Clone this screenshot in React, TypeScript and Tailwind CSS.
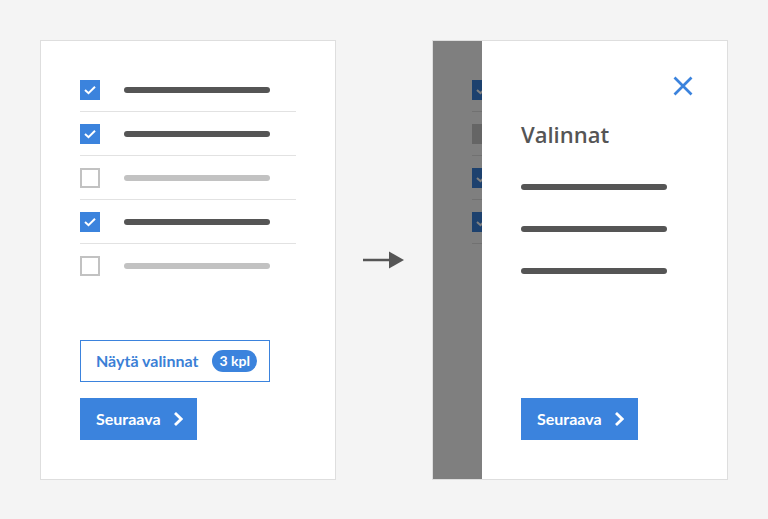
import React from 'react';

const BLUE = 'bg-[#3b83dd]';

type RowState = 'checked' | 'empty' | 'muted';

const CheckMark = () => (
  <svg width="20" height="20" viewBox="0 0 20 20" className="block">
    <polyline points="5,10 8.5,13.2 15,6.7" fill="none" stroke="#fff" strokeWidth="2" />
  </svg>
);

const Checkbox = ({ state }: { state: RowState }) => {
  if (state === 'checked') {
    return (
      <div className={`w-5 h-5 shrink-0 ${BLUE}`}>
        <CheckMark />
      </div>
    );
  }
  if (state === 'muted') {
    return <div className="w-5 h-5 shrink-0 bg-[#cbcbcb]" />;
  }
  return <div className="w-5 h-5 shrink-0 border-2 border-[#c2c2c2] bg-white" />;
};

const ListRow = ({ state, last }: { state: RowState; last?: boolean }) => (
  <div className={`flex items-center gap-6 pt-3 pb-[11px] ${last ? 'border-b border-transparent' : 'border-b border-[#e2e2e2]'}`}>
    <Checkbox state={state} />
    <div className={`h-[6px] w-[146px] rounded-full ${state === 'checked' ? 'bg-[#555555]' : 'bg-[#c2c2c2]'}`} />
  </div>
);

const Chevron = () => (
  <svg width="10" height="14" viewBox="0 0 10 14" className="block">
    <polyline points="2,1 8.2,7 2,13" fill="none" stroke="#fff" strokeWidth="2.8" />
  </svg>
);

const NextButton = () => (
  <button className={`flex items-center gap-[12px] w-[117px] h-[42px] pl-4 ${BLUE} text-white text-[16px] font-bold font-['Lato',sans-serif]`}>
    <span>Seuraava</span>
    <Chevron />
  </button>
);

const Card = ({ children, className = '' }: { children: React.ReactNode; className?: string }) => (
  <div className={`w-[296px] h-[440px] shrink-0 bg-white border border-[#dedede] ${className}`}>{children}</div>
);

const SelectionList = ({ rows }: { rows: RowState[] }) => (
  <div className="flex flex-col">
    {rows.map((r, i) => (
      <ListRow key={i} state={r} last={rows.length === 5 && i === rows.length - 1} />
    ))}
  </div>
);

const FlowArrow = () => (
  <svg width="41" height="18" viewBox="0 0 41 18" className="block">
    <line x1="0" y1="9" x2="28" y2="9" stroke="#555" strokeWidth="2.5" />
    <polygon points="26,0.5 41,9 26,17.5" fill="#555" />
  </svg>
);

const CloseIcon = () => (
  <svg width="20" height="20" viewBox="0 0 20 20" className="block">
    <path d="M1.5 1.5 L18.5 18.5 M18.5 1.5 L1.5 18.5" stroke="#3b83dd" strokeWidth="2.7" />
  </svg>
);

export default function App() {
  return (
    <div className="w-[768px] h-[519px] bg-[#f4f4f4] flex items-center pl-10 pt-10 pb-[39px]">
      {/* list view with selections */}
      <Card className="flex flex-col px-[39px] pt-[27px] pb-[39px]">
        <SelectionList rows={['checked', 'checked', 'empty', 'checked', 'empty']} />
        <div className="mt-auto flex flex-col gap-4">
          <button className="flex items-center gap-[14px] w-[190px] h-[42px] pl-[15px] border border-[#3b83dd] text-[#3b7fd6] text-[16px] font-bold font-['Lato',sans-serif]">
            <span>Näytä valinnat</span>
            <span className={`h-[22px] px-[7px] rounded-full ${BLUE} text-white text-[14px] leading-[22px]`}>3 kpl</span>
          </button>
          <NextButton />
        </div>
      </Card>

      <div className="w-24 flex justify-center pr-[1px]">
        <FlowArrow />
      </div>

      {/* same view with the selections drawer open */}
      <Card className="relative overflow-hidden">
        <div className="px-[39px] pt-[27px]">
          <SelectionList rows={['checked', 'muted', 'checked', 'checked']} />
        </div>
        <div className="absolute inset-0 bg-black/50" />
        <div className="absolute top-0 bottom-0 right-0 left-[49px] bg-white flex flex-col pl-[39px] pr-[34px] pt-[35px] pb-[39px]">
          <div className="flex justify-end">
            <CloseIcon />
          </div>
          <h2 className="mt-[23px] text-[22px] leading-[30px] font-semibold text-[#555555] font-['Open_Sans',sans-serif]">
            Valinnat
          </h2>
          <div className="mt-[35px] flex flex-col gap-9">
            <div className="h-[6px] w-[146px] rounded-full bg-[#555555]" />
            <div className="h-[6px] w-[146px] rounded-full bg-[#555555]" />
            <div className="h-[6px] w-[146px] rounded-full bg-[#555555]" />
          </div>
          <div className="mt-auto">
            <NextButton />
          </div>
        </div>
      </Card>
    </div>
  );
}
